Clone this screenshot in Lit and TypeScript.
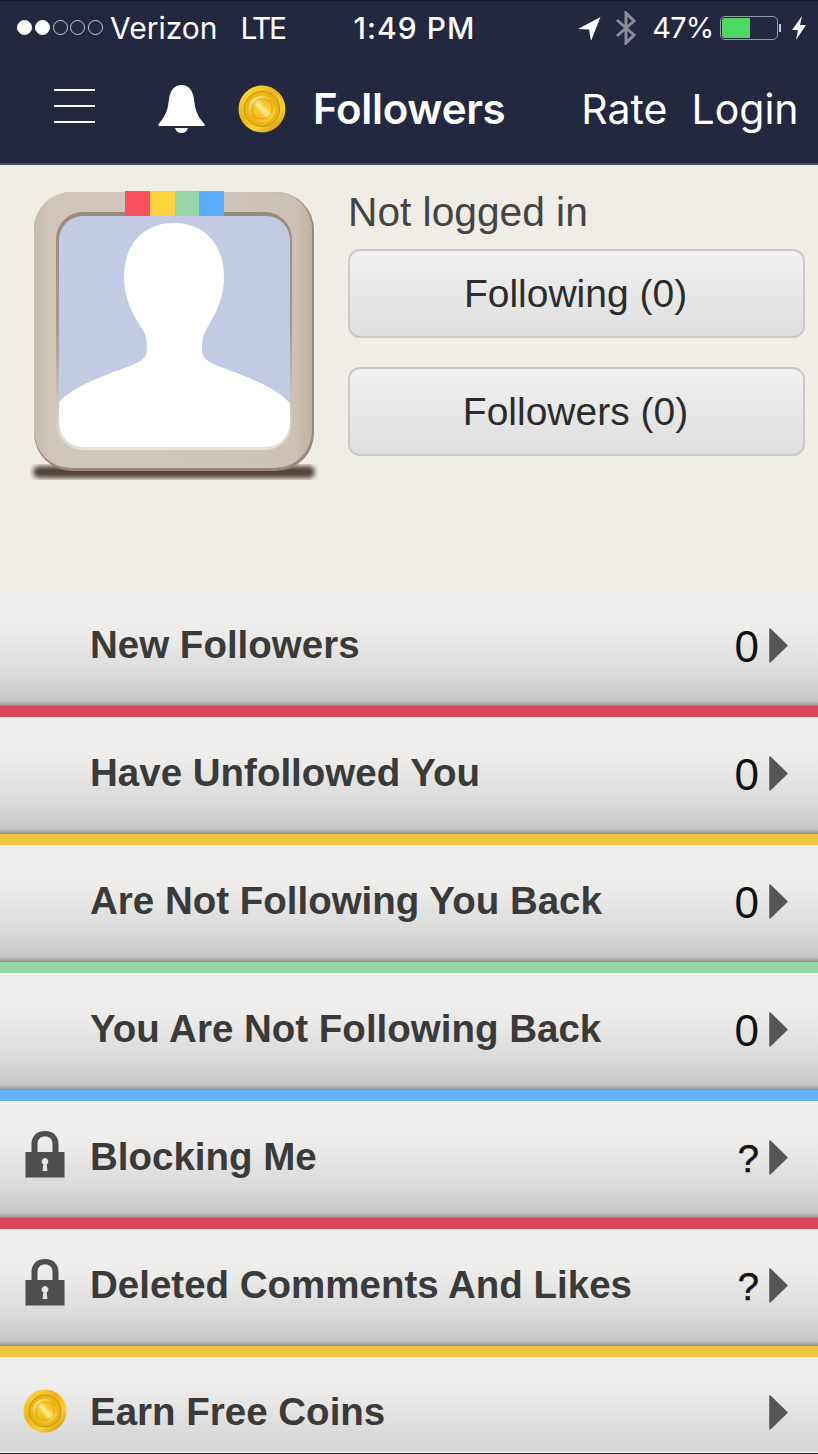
import { LitElement, css, html, svg } from 'lit'
import { customElement } from 'lit/decorators.js'

type Row = { label: string; count: string; bar: string; icon?: 'lock' | 'coin' }

const rows: Row[] = [
  { label: 'New Followers', count: '0', bar: 'red' },
  { label: 'Have Unfollowed You', count: '0', bar: 'yellow' },
  { label: 'Are Not Following You Back', count: '0', bar: 'green' },
  { label: 'You Are Not Following Back', count: '0', bar: 'blue' },
  { label: 'Blocking Me', count: '?', bar: 'red', icon: 'lock' },
  { label: 'Deleted Comments And Likes', count: '?', bar: 'yellow', icon: 'lock' },
  { label: 'Earn Free Coins', count: '', bar: 'none', icon: 'coin' },
]

let coinId = 0

// gold coin, used in the nav bar and on the last row
const coin = (size: number) => {
  const id = `coin${coinId++}`
  return html`<svg width=${size} height=${size} viewBox="0 0 48 48">
    <defs>
      <linearGradient id="${id}a" x1="0.1" y1="0" x2="0.9" y2="1">
        <stop offset="0" stop-color="#fbdc4e" />
        <stop offset="0.4" stop-color="#eeb310" />
        <stop offset="0.7" stop-color="#f9d030" />
        <stop offset="1" stop-color="#c98c08" />
      </linearGradient>
      <linearGradient id="${id}b" x1="0.15" y1="0.1" x2="0.85" y2="0.9">
        <stop offset="0" stop-color="#fde67c" />
        <stop offset="0.5" stop-color="#e8ae12" />
        <stop offset="1" stop-color="#fad234" />
      </linearGradient>
      <filter id="${id}f"><feGaussianBlur stdDeviation="1" /></filter>
    </defs>
    <circle cx="24" cy="24" r="23.5" fill="url(#${id}a)" />
    <circle cx="24" cy="24" r="17.500" fill="#ebb416" stroke="#c48f0a" stroke-width="1" />
    <circle cx="24" cy="24" r="13.500" fill="url(#${id}b)" />
    <circle cx="24" cy="24" r="10" fill="#f4c527" stroke="#d6a312" stroke-width="0.800" />
    <path d="M16 19 L20 15 L33 28.500 L28.500 33 Z" fill="#fce684" filter="url(#${id}f)" />
  </svg>`
}

const lock = html`<svg width="40" height="48" viewBox="0 0 40 48">
  <path
    fill-rule="evenodd"
    fill="#4e4e4e"
    d="M6.500 22 V14 C6.500 5.500 12.500 1 20 1 C27.500 1 33.500 5.500 33.500 14 V22 H39.500 V47.500 H0.500 V22 Z M12.500 22 H27.500 V14 C27.500 9 24.500 6.500 20 6.500 C15.500 6.500 12.500 9 12.500 14 Z M20 28 A3.500 3.500 0 0 0 18.300 34.500 L17.500 41 H22.500 L21.700 34.500 A3.500 3.500 0 0 0 20 28 Z"
  />
</svg>`

const chevron = html`<svg class="chev" width="19" height="35" viewBox="0 0 19 35">
  <path fill="#555" stroke="#555" stroke-width="1.500" stroke-linejoin="round" d="M1 1 L18 17.500 L1 34 Z" />
</svg>`

const avatar = svg`
  <defs>
    <linearGradient id="frame" x1="0" y1="0" x2="1" y2="0">
      <stop offset="0" stop-color="#c6baae" />
      <stop offset="0.06" stop-color="#d0c6bc" />
      <stop offset="0.5" stop-color="#cfc5bb" />
      <stop offset="0.94" stop-color="#ccc1b6" />
      <stop offset="1" stop-color="#bdafa3" />
    </linearGradient>
    <linearGradient id="rim" x1="0" y1="0" x2="0" y2="1">
      <stop offset="0" stop-color="#9a887b" />
      <stop offset="0.5" stop-color="#a99a8e" />
      <stop offset="1" stop-color="#e6e0da" />
    </linearGradient>
    <filter id="soft"><feGaussianBlur stdDeviation="2.500" /></filter>
    <filter id="edge"><feGaussianBlur stdDeviation="0.600" /></filter>
    <clipPath id="inner"><rect x="59" y="216" width="231" height="231" rx="24" /></clipPath>
  </defs>
  <rect x="33" y="466" width="282" height="12" rx="6" fill="#4f4038" filter="url(#soft)" />
  <rect x="34" y="192" width="280" height="279" rx="38" fill="#988779" />
  <rect x="34" y="192" width="278" height="276" rx="37" fill="url(#frame)" />
  <rect x="56" y="212" width="236" height="238" rx="27" fill="url(#rim)" />
  <rect x="59" y="216" width="231" height="231" rx="24" fill="#c2cbe3" />
  <g clip-path="url(#inner)">
    <path
      fill="#fff"
      filter="url(#edge)"
      d="M174 223 C204 223 224 244 224 277 C224 300 214 316 206 330 C203 336 202 340 202 350 C202 358 208 362 218 366 C244 376 272 384 291 404 V450 H57 V404 C76 384 104 376 130 366 C140 362 147 358 147 350 C147 340 146 336 143 330 C134 316 124 300 124 277 C124 244 144 223 174 223 Z"
    />
  </g>
  <rect x="125" y="191" width="25" height="25" fill="#f8505f" />
  <rect x="150" y="191" width="25" height="25" fill="#fed23f" />
  <rect x="175" y="191" width="24" height="25" fill="#96d6a9" />
  <rect x="199" y="191" width="25" height="25" fill="#5aaefc" />
`

@customElement('app-root')
export class AppRoot extends LitElement {
  static styles = css`
    :host {
      display: block;
      width: 818px;
      height: 1454px;
      overflow: hidden;
      background: #f0ece6;
      font-family: 'Liberation Sans', Arial, sans-serif;
    }

    .head {
      background: #23273f;
      border-bottom: 2px solid #4c4a55;
      border-top: 1px solid #15172a;
      height: 162px;
      color: #fff;
      font-family: Inter, 'Liberation Sans', sans-serif;
    }

    .status {
      display: flex;
      align-items: center;
      height: 53px;
      padding-left: 17px;
      font-size: 30px;
    }
    .dots {
      display: flex;
      gap: 2.75px;
      margin-right: 7px;
    }
    .dot {
      width: 15px;
      height: 15px;
      border-radius: 50%;
      box-sizing: border-box;
      border: 1px solid #c9cad2;
    }
    .dot.on {
      background: #fff;
      border-color: #fff;
    }
    .lte {
      margin-left: 23px;
      letter-spacing: -2.5px;
    }
    .time {
      margin-left: 69px;
      font-weight: 500;
      letter-spacing: 1px;
    }
    .loc {
      margin-left: 102px;
    }
    .bt {
      margin-left: 14px;
    }
    .pct {
      margin-left: 15px;
      font-size: 29px;
      letter-spacing: -0.8px;
    }
    .battery {
      margin-left: 6px;
      width: 58px;
      height: 24px;
      box-sizing: border-box;
      border: 1px solid #9a9ba6;
      border-radius: 5px;
      padding: 1px;
    }
    .battery div {
      width: 28px;
      height: 100%;
      background: #4cd964;
      border-radius: 3px 0 0 3px;
    }
    .nub {
      width: 2px;
      height: 8px;
      background: #c9cad2;
      margin-left: 1px;
    }
    .bolt {
      margin-left: 11px;
    }

    .nav {
      display: flex;
      align-items: center;
      height: 109px;
      padding-left: 54px;
    }
    .burger {
      display: flex;
      flex-direction: column;
      gap: 14px;
      width: 41px;
      margin-bottom: 6px;
    }
    .burger span {
      height: 2px;
      background: #fff;
    }
    .bell {
      margin-left: 63px;
    }
    .coin {
      margin-left: 33px;
      display: flex;
    }
    .title {
      margin-left: 27px;
      font-size: 42px;
      font-weight: 600;
      letter-spacing: -0.3px;
    }
    .link {
      font-size: 41px;
      font-weight: 400;
    }
    .rate {
      margin-left: 76px;
    }
    .login {
      margin-left: 24px;
    }

    .profile {
      display: flex;
      height: 424px;
      padding-left: 30px;
    }
    .avatar {
      width: 290px;
      height: 296px;
      margin-top: 21px;
    }
    .info {
      margin-left: 28px;
      width: 457px;
      display: flex;
      flex-direction: column;
    }
    .who {
      font-size: 40.700px;
      line-height: 44px;
      margin-top: 25px;
      color: #444;
    }
    .btn {
      box-sizing: border-box;
      height: 89px;
      border: 2px solid #c9c9c7;
      border-radius: 12px;
      background: linear-gradient(#f1f1f1, #dedede);
      color: #2c2c2c;
      font-size: 39px;
      padding: 1px 2px 0 0;
      display: flex;
      align-items: center;
      justify-content: center;
    }
    .who + .btn {
      margin-top: 15px;
    }
    .btn + .btn {
      margin-top: 29px;
    }

    .row {
      height: 117px;
      box-sizing: border-box;
      padding-bottom: 6px;
      display: flex;
      align-items: center;
      background: linear-gradient(#efedeb 0%, #eeedec 35%, #d9d9d9 75%, #c6c6c6 96%, #8e8e8e 100%);
      color: #3a3a3a;
    }
    .row.last {
      height: 96px;
      padding: 13px 0 0;
      background: linear-gradient(#efedeb 0%, #eeedec 30%, #dcdcdc 75%, #d6d6d6 97%, #ececec 100%);
    }
    .slot {
      width: 90px;
      display: flex;
      justify-content: center;
      flex: none;
      padding-right: 1px;
      box-sizing: border-box;
      margin-top: -6px;
    }
    .row.last .slot {
      margin-top: -2px;
    }
    .label {
      flex: 1;
      font-size: 38.500px;
      font-weight: 700;
    }
    .count {
      font-size: 44px;
      color: #111;
      margin-top: 4px;
    }
    .count.q {
      font-size: 38px;
      -webkit-text-stroke: 0.5px #111;
      margin-top: 6px;
    }
    .chev {
      margin: 2px 30px 0 10px;
    }
    .bar {
      height: 11px;
    }
    .bar.red {
      background: #d9485a;
    }
    .bar.yellow {
      background: #eec643;
    }
    .bar.green {
      background: #92d4a8;
    }
    .bar.blue {
      background: #62b2f5;
    }
    .bar.none {
      height: 1px;
      background: #333;
    }
  `

  render() {
    return html`
      <div class="head">
        <div class="status">
          <div class="dots">
            ${[1, 1, 0, 0, 0].map((on) => html`<div class="dot ${on ? 'on' : ''}"></div>`)}
          </div>
          <span>Verizon</span>
          <span class="lte">LTE</span>
          <span class="time">1:49 PM</span>
          <svg class="loc" width="24" height="24" viewBox="0 0 24 24">
            <path fill="#fff" d="M23.500 1 L1 13 L12 13.500 L14 25 Z" />
          </svg>
          <svg class="bt" width="22" height="34" viewBox="0 0 22 34" fill="none" stroke="#8b8c99" stroke-width="3">
            <path d="M2 9 L19 24 L11 32 V2 L19 10 L2 25" />
          </svg>
          <span class="pct">47%</span>
          <div class="battery"><div></div></div>
          <div class="nub"></div>
          <svg class="bolt" width="14" height="24" viewBox="0 0 14 24">
            <path fill="#fff" d="M10 0 L0 14 H6 L4 24 L14 9 H8 Z" />
          </svg>
        </div>
        <div class="nav">
          <div class="burger"><span></span><span></span><span></span></div>
          <svg class="bell" width="47" height="48" viewBox="0 0 47 48">
            <path
              fill="#fff"
              d="M23.500 0 C31 0 35 6 36 14 C37 24 39 31 46.500 39 V41 H0.500 V39 C8 31 10 24 11 14 C12 6 16 0 23.500 0 Z M17 43 H30 C29 46 27 48 23.500 48 C20 48 18 46 17 43 Z"
            />
          </svg>
          <div class="coin">${coin(48)}</div>
          <span class="title">Followers</span>
          <span class="link rate">Rate</span>
          <span class="link login">Login</span>
        </div>
      </div>
      <div class="profile">
        <svg class="avatar" viewBox="30 186 290 296">${avatar}</svg>
        <div class="info">
          <div class="who">Not logged in</div>
          <div class="btn">Following (0)</div>
          <div class="btn">Followers (0)</div>
        </div>
      </div>
      ${rows.map(
        (r) => html`
          <div class="row ${r.bar === 'none' ? 'last' : ''}">
            <div class="slot">${r.icon === 'lock' ? lock : r.icon === 'coin' ? coin(44) : ''}</div>
            <div class="label">${r.label}</div>
            <div class="count ${r.count === '?' ? 'q' : ''}">${r.count}</div>
            ${chevron}
          </div>
          <div class="bar ${r.bar}"></div>
        `
      )}
    `
  }
}

declare global {
  interface HTMLElementTagNameMap {
    'app-root': AppRoot
  }
}
